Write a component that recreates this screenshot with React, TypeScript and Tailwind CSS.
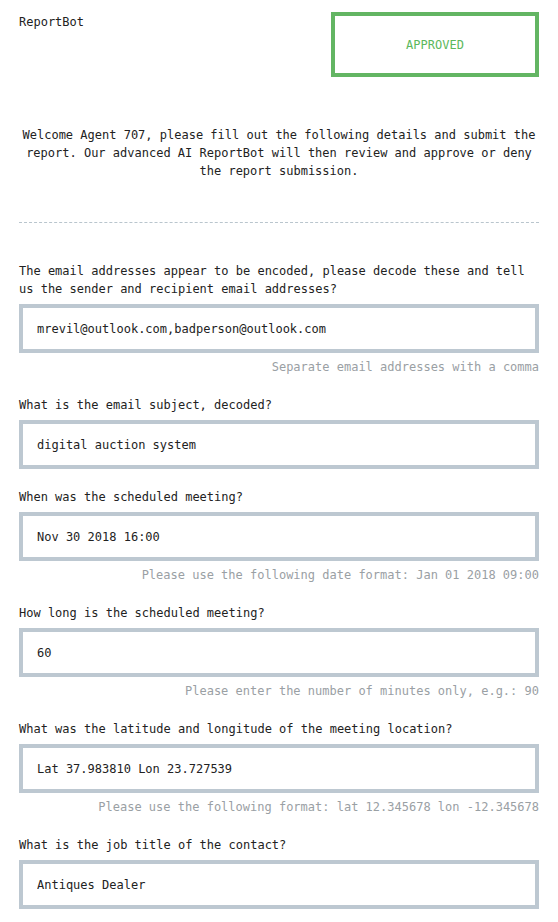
import React from "react";

type Field = { label: string; value: string; hint?: string };

const fields: Field[] = [
  {
    label:
      "The email addresses appear to be encoded, please decode these and tell us the sender and recipient email addresses?",
    value: "mrevil@outlook.com,badperson@outlook.com",
    hint: "Separate email addresses with a comma",
  },
  { label: "What is the email subject, decoded?", value: "digital auction system" },
  {
    label: "When was the scheduled meeting?",
    value: "Nov 30 2018 16:00",
    hint: "Please use the following date format: Jan 01 2018 09:00",
  },
  {
    label: "How long is the scheduled meeting?",
    value: "60",
    hint: "Please enter the number of minutes only, e.g.: 90",
  },
  {
    label: "What was the latitude and longitude of the meeting location?",
    value: "Lat 37.983810 Lon 23.727539",
    hint: "Please use the following format: lat 12.345678 lon -12.345678",
  },
  { label: "What is the job title of the contact?", value: "Antiques Dealer" },
];

export default function App() {
  return (
    <div className="min-h-[922px] bg-white px-[19px] pt-[12px] font-['DejaVu_Sans_Mono',monospace] text-[12px] leading-[18px] text-[#222]">
      <div className="flex items-start justify-between">
        <div className="pt-[1px]">ReportBot</div>
        <div className="flex h-[65px] w-[208px] items-center justify-center border-4 border-[#63b563] text-[#5cb85c]">
          APPROVED
        </div>
      </div>

      <p className="mt-[49px] text-center">
        Welcome Agent 707, please fill out the following details and submit the report. Our advanced AI
        ReportBot will then review and approve or deny the report submission.
      </p>

      <div className="mt-[42px] border-t border-dashed border-[#b9c5cd]" />

      <div className="mt-[39px] flex flex-col">
        {fields.map((f, i) => (
          <div key={i} className={f.hint ? "mb-[20px]" : "mb-[19px]"}>
            <div className="mb-[6px]">{f.label}</div>
            <input
              readOnly
              value={f.value}
              className="block h-[49px] w-full border-4 border-[#bdc8d1] bg-white px-[14px] font-['DejaVu_Sans_Mono',monospace] text-[12px] text-[#222] outline-none"
            />
            {f.hint && <div className="mt-[5px] text-right text-[#9aa0a4]">{f.hint}</div>}
          </div>
        ))}
      </div>
    </div>
  );
}
